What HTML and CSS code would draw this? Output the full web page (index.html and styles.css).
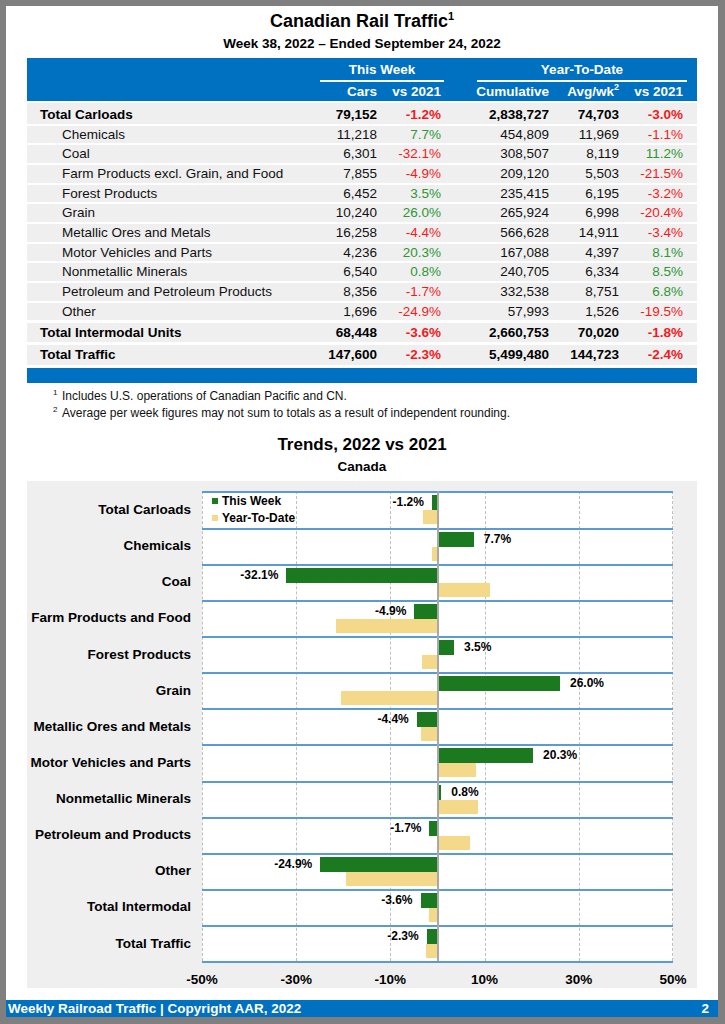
FILE: index.html
```html
<!DOCTYPE html>
<html lang="en">
<head>
<meta charset="utf-8">
<title>Canadian Rail Traffic</title>
<link rel="stylesheet" href="styles.css">
</head>
<body>
<div class="frame">
<div class="page">
  <h1 class="title">Canadian Rail Traffic<sup>1</sup></h1>
  <div class="subtitle">Week 38, 2022 – Ended September 24, 2022</div>

  <div class="table">
    <div class="thead">
      <div class="hgrid hrow1">
        <div class="grp grp-week">This Week</div>
        <div class="grp grp-ytd">Year-To-Date</div>
      </div>
      <div class="hgrid hrow2">
        <div></div><div>Cars</div><div>vs 2021</div><div>Cumulative</div><div>Avg/wk<sup>2</sup></div><div>vs 2021</div>
      </div>
    </div>

    <div class="trow tot first"><div class="lbl">Total Carloads</div><div>79,152</div><div class="neg">-1.2%</div><div>2,838,727</div><div>74,703</div><div class="neg">-3.0%</div></div>
    <div class="trow"><div class="lbl">Chemicals</div><div>11,218</div><div class="pos">7.7%</div><div>454,809</div><div>11,969</div><div class="neg">-1.1%</div></div>
    <div class="trow"><div class="lbl">Coal</div><div>6,301</div><div class="neg">-32.1%</div><div>308,507</div><div>8,119</div><div class="pos">11.2%</div></div>
    <div class="trow"><div class="lbl">Farm Products excl. Grain, and Food</div><div>7,855</div><div class="neg">-4.9%</div><div>209,120</div><div>5,503</div><div class="neg">-21.5%</div></div>
    <div class="trow"><div class="lbl">Forest Products</div><div>6,452</div><div class="pos">3.5%</div><div>235,415</div><div>6,195</div><div class="neg">-3.2%</div></div>
    <div class="trow"><div class="lbl">Grain</div><div>10,240</div><div class="pos">26.0%</div><div>265,924</div><div>6,998</div><div class="neg">-20.4%</div></div>
    <div class="trow"><div class="lbl">Metallic Ores and Metals</div><div>16,258</div><div class="neg">-4.4%</div><div>566,628</div><div>14,911</div><div class="neg">-3.4%</div></div>
    <div class="trow"><div class="lbl">Motor Vehicles and Parts</div><div>4,236</div><div class="pos">20.3%</div><div>167,088</div><div>4,397</div><div class="pos">8.1%</div></div>
    <div class="trow"><div class="lbl">Nonmetallic Minerals</div><div>6,540</div><div class="pos">0.8%</div><div>240,705</div><div>6,334</div><div class="pos">8.5%</div></div>
    <div class="trow"><div class="lbl">Petroleum and Petroleum Products</div><div>8,356</div><div class="neg">-1.7%</div><div>332,538</div><div>8,751</div><div class="pos">6.8%</div></div>
    <div class="trow"><div class="lbl">Other</div><div>1,696</div><div class="neg">-24.9%</div><div>57,993</div><div>1,526</div><div class="neg">-19.5%</div></div>
    <div class="trow tot big gap"><div class="lbl">Total Intermodal Units</div><div>68,448</div><div class="neg">-3.6%</div><div>2,660,753</div><div>70,020</div><div class="neg">-1.8%</div></div>
    <div class="trow tot big"><div class="lbl">Total Traffic</div><div>147,600</div><div class="neg">-2.3%</div><div>5,499,480</div><div>144,723</div><div class="neg">-2.4%</div></div>
    <div class="tbar"></div>
  </div>

  <div class="notes">
    <div class="note"><sup>1</sup>Includes U.S. operations of Canadian Pacific and CN.</div>
    <div class="note"><sup>2</sup>Average per week figures may not sum to totals as a result of independent rounding.</div>
  </div>

  <h2 class="ctitle">Trends, 2022 vs 2021</h2>
  <div class="csub">Canada</div>

  <div class="chart">
    <div class="cgrid">
      <div class="cats">
        <div>Total Carloads</div>
        <div>Chemicals</div>
        <div>Coal</div>
        <div>Farm Products and Food</div>
        <div>Forest Products</div>
        <div>Grain</div>
        <div>Metallic Ores and Metals</div>
        <div>Motor Vehicles and Parts</div>
        <div>Nonmetallic Minerals</div>
        <div>Petroleum and Products</div>
        <div>Other</div>
        <div>Total Intermodal</div>
        <div>Total Traffic</div>
      </div>
      <div class="plot">
        <div class="vline" style="left:0%"></div>
        <div class="vline" style="left:20%"></div>
        <div class="vline" style="left:40%"></div>
        <div class="vline" style="left:60%"></div>
        <div class="vline" style="left:80%"></div>
        <div class="vline last" style="left:100%"></div>
        <div class="zero"></div>

        <div class="prow">
          <div class="legend">
            <div><span class="sw sw-wk"></span>This Week</div>
            <div><span class="sw sw-ytd"></span>Year-To-Date</div>
          </div>
          <div class="bar wk" style="left:48.8%;width:1.2%"></div>
          <div class="val" style="right:calc(51.2% + 8px)">-1.2%</div>
          <div class="bar ytd" style="left:47%;width:3%"></div>
        </div>
        <div class="prow">
          <div class="bar wk" style="left:50%;width:7.7%"></div>
          <div class="val" style="left:calc(57.7% + 10px)">7.7%</div>
          <div class="bar ytd" style="left:48.9%;width:1.1%"></div>
        </div>
        <div class="prow">
          <div class="bar wk" style="left:17.9%;width:32.1%"></div>
          <div class="val" style="right:calc(82.1% + 8px)">-32.1%</div>
          <div class="bar ytd" style="left:50%;width:11.2%"></div>
        </div>
        <div class="prow">
          <div class="bar wk" style="left:45.1%;width:4.9%"></div>
          <div class="val" style="right:calc(54.9% + 8px)">-4.9%</div>
          <div class="bar ytd" style="left:28.5%;width:21.5%"></div>
        </div>
        <div class="prow">
          <div class="bar wk" style="left:50%;width:3.5%"></div>
          <div class="val" style="left:calc(53.5% + 10px)">3.5%</div>
          <div class="bar ytd" style="left:46.8%;width:3.2%"></div>
        </div>
        <div class="prow">
          <div class="bar wk" style="left:50%;width:26%"></div>
          <div class="val" style="left:calc(76% + 10px)">26.0%</div>
          <div class="bar ytd" style="left:29.6%;width:20.4%"></div>
        </div>
        <div class="prow">
          <div class="bar wk" style="left:45.6%;width:4.4%"></div>
          <div class="val" style="right:calc(54.4% + 8px)">-4.4%</div>
          <div class="bar ytd" style="left:46.6%;width:3.4%"></div>
        </div>
        <div class="prow">
          <div class="bar wk" style="left:50%;width:20.3%"></div>
          <div class="val" style="left:calc(70.3% + 10px)">20.3%</div>
          <div class="bar ytd" style="left:50%;width:8.1%"></div>
        </div>
        <div class="prow">
          <div class="bar wk" style="left:50%;width:0.8%"></div>
          <div class="val" style="left:calc(50.8% + 10px)">0.8%</div>
          <div class="bar ytd" style="left:50%;width:8.5%"></div>
        </div>
        <div class="prow">
          <div class="bar wk" style="left:48.3%;width:1.7%"></div>
          <div class="val" style="right:calc(51.7% + 8px)">-1.7%</div>
          <div class="bar ytd" style="left:50%;width:6.8%"></div>
        </div>
        <div class="prow">
          <div class="bar wk" style="left:25.1%;width:24.9%"></div>
          <div class="val" style="right:calc(74.9% + 8px)">-24.9%</div>
          <div class="bar ytd" style="left:30.5%;width:19.5%"></div>
        </div>
        <div class="prow">
          <div class="bar wk" style="left:46.4%;width:3.6%"></div>
          <div class="val" style="right:calc(53.6% + 8px)">-3.6%</div>
          <div class="bar ytd" style="left:48.2%;width:1.8%"></div>
        </div>
        <div class="prow">
          <div class="bar wk" style="left:47.7%;width:2.3%"></div>
          <div class="val" style="right:calc(52.3% + 8px)">-2.3%</div>
          <div class="bar ytd" style="left:47.6%;width:2.4%"></div>
        </div>
      </div>
    </div>
    <div class="axis">
      <span>-50%</span><span>-30%</span><span>-10%</span><span>10%</span><span>30%</span><span>50%</span>
    </div>
  </div>

  <div class="footer">
    <span>Weekly Railroad Traffic | Copyright AAR, 2022</span>
    <span>2</span>
  </div>
</div>
</div>
</body>
</html>
```

FILE: styles.css
```css
* { box-sizing: border-box; margin: 0; padding: 0; }
html, body { width: 725px; height: 1024px; }
body {
  background: #7f7f7f;
  font-family: "Liberation Sans", Arial, Helvetica, sans-serif;
  color: #000;
  overflow: hidden;
}
.frame { padding: 6px 7px 7px 6px; height: 1024px; }
.page {
  background: #fff;
  height: 1011px;
  display: flex;
  flex-direction: column;
  padding-top: 4px;
}

.title {
  font-size: 18px;
  font-weight: bold;
  text-align: center;
  line-height: 22px;
}
.title sup { font-size: 11px; line-height: 0; vertical-align: 7px; }
.subtitle {
  font-size: 13.5px;
  font-weight: bold;
  text-align: center;
  line-height: 18px;
  margin-top: 3px;
}

/* table */
.table { margin: 5px 21px 0; }
.thead { background: #0070c0; color: #fff; font-weight: bold; font-size: 13.5px; }
.hgrid, .trow {
  display: grid;
  grid-template-columns: 1fr 60px 64px 108px 70px 64px;
  padding-right: 14px;
}
.hrow1 { padding-top: 2px; }
.grp { text-align: center; line-height: 20px; border-bottom: 2px solid #fff; }
.grp-week { grid-column: 2 / 4; margin: 0 -3px 0 3px; }
.grp-ytd { grid-column: 4 / 7; margin: 0 -4px 0 36px; }
.hrow2 > div { line-height: 19px; text-align: right; white-space: nowrap; }
.hrow2 sup { font-size: 9px; line-height: 0; vertical-align: 6px; }

.trow {
  background: #efefef;
  margin-top: 2px;
  height: 17.7px;
  line-height: 17.7px;
  font-size: 13.5px;
  color: #111;
}
.trow > div { text-align: right; white-space: nowrap; }
.trow > .lbl { text-align: left; padding-left: 35px; }
.trow.tot { font-weight: bold; color: #000; }
.trow.tot > .lbl { padding-left: 13px; }
.trow.first { height: 20.5px; padding-top: 2.5px; line-height: 18px; }
.trow.big { height: 19.5px; line-height: 19.5px; margin-top: 3px; }
.trow.big.gap { margin-top: 2.5px; }
.trow .neg { color: #f5191c; }
.trow .pos { color: #2e9635; }
.tbar { height: 15px; background: #0070c0; margin-top: 3px; }

/* footnotes */
.notes { margin-top: 5px; padding-left: 47px; font-size: 12px; line-height: 17px; color: #111; }
.note sup { display: inline-block; width: 9px; font-size: 8px; line-height: 0; vertical-align: 5px; }

/* chart */
.ctitle {
  font-size: 17px;
  font-weight: bold;
  text-align: center;
  line-height: 22px;
  margin-top: 12.5px;
}
.csub {
  font-size: 13.5px;
  font-weight: bold;
  text-align: center;
  line-height: 18px;
  margin-top: 1.5px;
}
.chart {
  margin: 5.5px 21px 0;
  background: #efefef;
  padding-top: 10px;
  height: 507px;
}
.cgrid { display: grid; grid-template-columns: 175px 471px; }
.cats > div {
  height: 36.15px;
  display: flex;
  align-items: center;
  justify-content: flex-end;
  padding-right: 11px;
  font-weight: bold;
  font-size: 13.5px;
  white-space: nowrap;
}
.plot {
  position: relative;
  background: #fff;
  border-bottom: 2px solid #5b9bd5;
}
.prow {
  position: relative;
  height: 36.15px;
  border-top: 2px solid #5b9bd5;
}
.vline {
  position: absolute;
  top: 0;
  bottom: 0;
  border-left: 1px dashed #bfbfbf;
}
.vline.last { margin-left: -1px; }
.zero {
  position: absolute;
  top: 0;
  bottom: 0;
  left: 50%;
  width: 2px;
  margin-left: -1px;
  background: #a8a8a8;
  z-index: 2;
}
.bar { position: absolute; z-index: 1; }
.wk { top: 2px; height: 15px; background: #1b7a1f; }
.ytd { top: 17px; height: 14px; background: #f5d98b; }
.val {
  position: absolute;
  z-index: 3;
  top: 2px;
  line-height: 15px;
  font-size: 12px;
  font-weight: bold;
  white-space: nowrap;
}
.legend {
  position: absolute;
  left: 10px;
  top: 0;
  z-index: 3;
  font-size: 12px;
  font-weight: bold;
  line-height: 17px;
}
.sw { display: inline-block; width: 6px; height: 6px; margin-right: 4px; vertical-align: 1px; }
.sw-wk { background: #1b7a1f; }
.sw-ytd { background: #f5d98b; }

.axis {
  display: flex;
  justify-content: space-between;
  margin-left: 155px;
  width: 511px;
  padding-top: 9px;
}
.axis span {
  width: 40px;
  text-align: center;
  font-weight: bold;
  font-size: 13.5px;
  line-height: 16px;
}

/* footer */
.footer {
  margin-top: auto;
  background: #0070c0;
  color: #fff;
  font-weight: bold;
  font-size: 13.5px;
  height: 17px;
  line-height: 17px;
  display: flex;
  justify-content: space-between;
  padding: 0 9px 0 2px;
}
```
